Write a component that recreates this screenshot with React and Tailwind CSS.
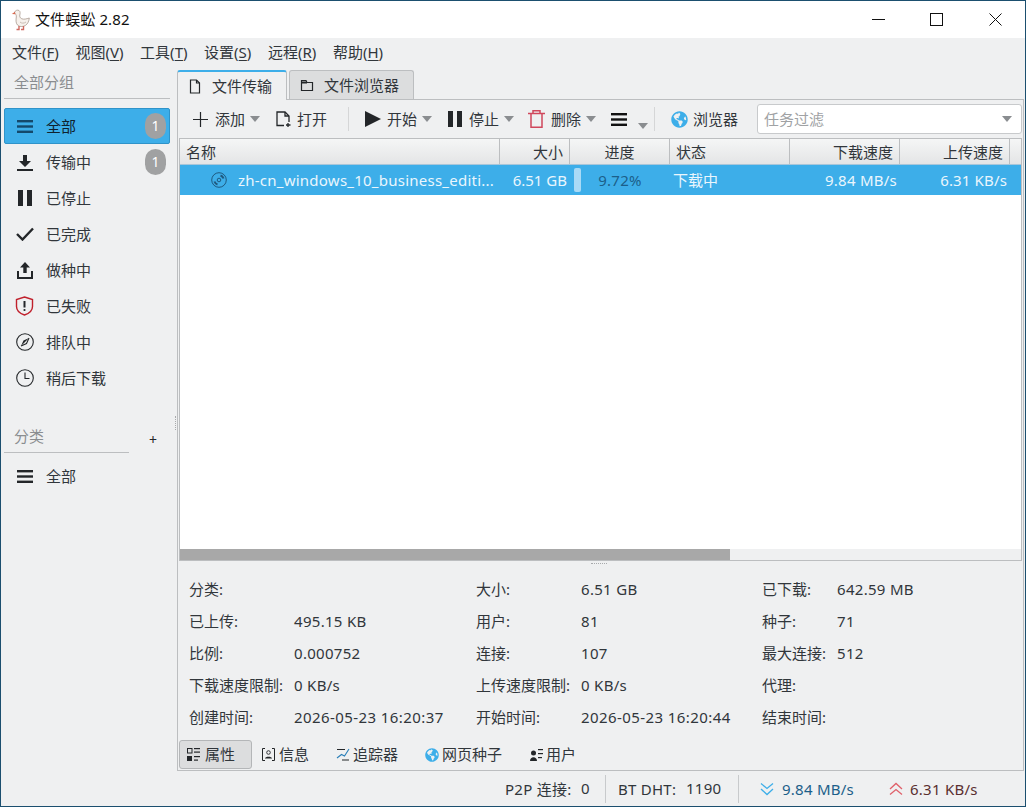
import React from "react";
import { FaGlobeAmericas } from "react-icons/fa";

const Caret = ({ className = "" }) => (
  <svg width="10" height="6" viewBox="0 0 10 6" className={`shrink-0 ${className}`}>
    <path d="M0 0h10L5 6z" fill="#8a8d90" />
  </svg>
);

const Duck = () => (
  <svg width="20" height="22" viewBox="0 0 20 22">
    <path d="M3.500 3.500C4 1.500 6.500 .5 8 1.500c1.500 1 1.200 3 .8 4.500-.3 1.500.2 3 2 3.800 2 .8 4.500 .2 7.500-.8-.3 3-1.500 6-4 7.500-2.500 1.500-6 1.500-7.800-.5C4.500 14 5 10.500 5.300 8 5.500 6.500 5 5.500 4.300 5z" fill="#f6f1ec" stroke="#a99a90" strokeWidth=".8" />
    <path d="M4 2.800L.8 5l3.500.3z" fill="#d8694f" />
    <path d="M9 13c1.500 1.500 4 1.500 6 0" stroke="#c9bdb4" strokeWidth="1" fill="none" />
    <path d="M8 17v3.500H5.500M12.500 17v3.500H10" stroke="#cf6a60" strokeWidth="1.400" fill="none" />
  </svg>
);

const FileIcon = () => (
  <svg width="14" height="15" viewBox="0 0 14 15" fill="none" stroke="#232629" strokeWidth="1.200" className="shrink-0">
    <path d="M2.500 1h6l3 3v10h-9z" />
    <path d="M8.500 1v3h3" />
  </svg>
);

const FolderIcon = () => (
  <svg width="14" height="13" viewBox="0 0 14 13" fill="none" stroke="#232629" strokeWidth="1.200" className="shrink-0">
    <path d="M1.500 1.500h4.500l1 2h5.500v8h-11z" />
    <path d="M1.500 3.500h5.500" strokeWidth="2" />
  </svg>
);

const PlusIcon = () => (
  <svg width="15" height="15" viewBox="0 0 15 15" stroke="#232629" strokeWidth="1.200" className="shrink-0">
    <path d="M7.500 0v15M0 7.500h15" />
  </svg>
);

const OpenIcon = () => (
  <svg width="15" height="16" viewBox="0 0 15 16" fill="none" stroke="#232629" strokeWidth="1.300" className="shrink-0">
    <path d="M8 14.500H1v-13.500h8l4 4v6" />
    <path d="M9 1v4h4" />
    <path d="M12 12v4M10 14h4.500" />
  </svg>
);

const PlayIcon = () => (
  <svg width="16" height="16" viewBox="0 0 16 16" fill="#232629" className="shrink-0">
    <path d="M0 0l16 8-16 8z" />
  </svg>
);

const PauseIcon = ({ className = "" }) => (
  <svg width="14" height="16" viewBox="0 0 14 16" fill="#232629" className={`shrink-0 ${className}`}>
    <rect x="0" y="0" width="5" height="16" />
    <rect x="9" y="0" width="5" height="16" />
  </svg>
);

const TrashIcon = () => (
  <svg width="17" height="18" viewBox="0 0 17 18" fill="none" stroke="#d0475c" strokeWidth="1.500" className="shrink-0">
    <path d="M0 3.500h17M5 3.500v-2.700h7v2.700M3 3.500v13.700h11V3.500" />
  </svg>
);

const BarsIcon = ({ color = "#232629", width = 16 }) => (
  <svg width={width} height="13" viewBox="0 0 16 13" fill={color} className="shrink-0">
    <rect x="0" y="0" width="16" height="2.400" />
    <rect x="0" y="5.300" width="16" height="2.400" />
    <rect x="0" y="10.600" width="16" height="2.400" />
  </svg>
);

const DownloadIcon = () => (
  <svg width="16" height="17" viewBox="0 0 16 17" fill="#232629">
    <path d="M6 1h4v6h4l-6 6-6-6h4z" />
    <rect x="0" y="15" width="16" height="2" />
  </svg>
);

const UploadIcon = () => (
  <svg width="16" height="17" viewBox="0 0 16 17" fill="#232629">
    <path d="M8 0l5 5.500h-3.300V11H6.300V5.500H3z" />
    <path d="M0 9h2v6h12V9h2v8H0z" />
  </svg>
);

const CheckIcon = () => (
  <svg width="18" height="14" viewBox="0 0 18 14" fill="none" stroke="#232629" strokeWidth="2.400">
    <path d="M1 7l5.500 5.500L17 1.500" />
  </svg>
);

const ShieldIcon = () => (
  <svg width="19" height="20" viewBox="0 0 19 20" fill="none">
    <path d="M9.500 1l8 2.500v7c0 4-3.500 7-8 8.500-4.500-1.500-8-4.500-8-8.500v-7z" stroke="#c0202c" strokeWidth="1.400" />
    <path d="M9.500 5v6.500" stroke="#232629" strokeWidth="2" />
    <circle cx="9.500" cy="14" r="1.100" fill="#232629" />
  </svg>
);

const CompassIcon = () => (
  <svg width="18" height="18" viewBox="0 0 18 18" fill="none" stroke="#232629" strokeWidth="1.100">
    <circle cx="9" cy="9" r="8.300" />
    <path d="M13 5l-5.500 2.500L5 13z" fill="#232629" stroke="none" />
    <path d="M13 5l-2.500 5.500L5 13" />
  </svg>
);

const ClockIcon = () => (
  <svg width="18" height="18" viewBox="0 0 18 18" fill="none" stroke="#232629" strokeWidth="1.100">
    <circle cx="9" cy="9" r="8.300" />
    <path d="M9 3.500V9.500h4.500" />
  </svg>
);

const DiscIcon = () => (
  <svg width="16" height="16" viewBox="0 0 16 16" fill="none" stroke="#1f5a80" strokeWidth="1" className="shrink-0">
    <circle cx="8" cy="8" r="7.300" />
    <circle cx="8" cy="8" r="1.800" />
    <path d="M3.500 9.500a4.700 4.700 0 0 0 3 3M12.500 6.500a4.700 4.700 0 0 0-3-3" strokeWidth="2" />
  </svg>
);

const PropsIcon = () => (
  <svg width="13" height="13" viewBox="0 0 13 13" fill="#232629" className="shrink-0">
    <rect x="0.500" y="0.500" width="4.500" height="4.500" fill="none" stroke="#232629" />
    <rect x="0" y="8" width="5" height="5" />
    <rect x="7" y="0" width="6" height="1.200" />
    <rect x="7" y="3.500" width="6" height="1.200" />
    <rect x="7" y="8" width="6" height="1.200" />
    <rect x="7" y="11.500" width="4" height="1.200" />
  </svg>
);

const InfoIcon = () => (
  <svg width="13" height="13" viewBox="0 0 13 13" fill="none" stroke="#232629" className="shrink-0">
    <path d="M3 .500H.500V12.500H3M10 .500h2.500V12.500H10" />
    <circle cx="6.500" cy="4.500" r="1.800" stroke="#232629" strokeWidth=".9" />
    <path d="M3 10.500c0-2.500 7-2.500 7 0z" fill="#232629" stroke="none" />
  </svg>
);

const TrackerIcon = () => (
  <svg width="14" height="13" viewBox="0 0 14 13" fill="none" stroke="#232629" strokeWidth="1.100" className="shrink-0">
    <path d="M1 1.500h8M6 12h7" />
    <path d="M1 10l4.500-3.500 3 1.500L13 1" stroke="#2a7fb8" />
  </svg>
);

const UsersIcon = () => (
  <svg width="13" height="13" viewBox="0 0 13 13" fill="#232629" className="shrink-0">
    <circle cx="3.500" cy="5" r="2.500" />
    <path d="M0 13c0-5 7-5 7 0z" />
    <rect x="8" y="1" width="5" height="1.200" />
    <rect x="8" y="5" width="5" height="1.200" />
    <rect x="8" y="9" width="4" height="1.200" />
  </svg>
);

const Chevrons = ({ color, up }) => (
  <svg width="14" height="14" viewBox="0 0 14 14" fill="none" stroke={color} strokeWidth="1.300" className={`shrink-0 ${up ? "rotate-180" : ""}`}>
    <path d="M1 1.500l6 5 6-5M1 7l6 5.500L13 7" />
  </svg>
);

const MenuItem = ({ label, hot }) => (
  <span>
    {label}(<span className="underline underline-offset-2">{hot}</span>)
  </span>
);

const SideRow = ({ icon, label, count, active }) => (
  <div
    className={`ml-[3px] flex h-[36px] w-[166px] items-center rounded-[2px] border ${
      active ? "border-[#2f93c9] bg-[#3daee9]" : "border-transparent"
    }`}
  >
    <div className="mr-[2px] flex w-[39px] shrink-0 justify-center">{icon}</div>
    <span className={active ? "text-[#10222e]" : "text-[#31363b]"}>{label}</span>
    {count && (
      <span className="ml-auto mr-[3px] flex h-[26px] w-[21px] items-center justify-center rounded-full bg-[#a0a1a2] text-[14px] text-white">
        {count}
      </span>
    )}
  </div>
);

const Sep = ({ className = "" }) => <div className={`h-[24px] w-px shrink-0 bg-[#d5d6d7] ${className}`} />;

const columns = "grid grid-cols-[320px_70px_100px_120px_110px_110px_1fr]";

const Th = ({ children, className = "" }) => (
  <div className={`flex items-center border-r border-[#bcbec0] px-[6px] pt-[1px] ${className}`}>{children}</div>
);

const details = [
  ["分类:", "", "大小:", "6.51 GB", "已下载:", "642.59 MB"],
  ["已上传:", "495.15 KB", "用户:", "81", "种子:", "71"],
  ["比例:", "0.000752", "连接:", "107", "最大连接:", "512"],
  ["下载速度限制:", "0 KB/s", "上传速度限制:", "0 KB/s", "代理:", ""],
  ["创建时间:", "2026-05-23 16:20:37", "开始时间:", "2026-05-23 16:20:44", "结束时间:", ""],
];

export default function App() {
  return (
    <div className="flex h-[807px] w-[1026px] flex-col overflow-hidden whitespace-nowrap border border-[#1b4f6f] bg-[#eff0f1] font-['Noto_Sans','Noto_Sans_CJK_SC',sans-serif] text-[15px] leading-none text-[#31363b]">
      {/* title bar */}
      <div className="flex h-[37px] shrink-0 items-center bg-white pl-[10px] text-[#111]">
        <Duck />
        <span className="ml-[4px] tracking-[0.1px]">文件蜈蚣 2.82</span>
        <div className="ml-auto flex items-center">
          <div className="flex w-[58px] justify-center">
            <svg width="13" height="13" viewBox="0 0 13 13" stroke="#111"><path d="M0 6.500h13" /></svg>
          </div>
          <div className="flex w-[58px] justify-center">
            <svg width="13" height="13" viewBox="0 0 13 13" fill="none" stroke="#111"><rect x=".5" y=".5" width="12" height="12" /></svg>
          </div>
          <div className="flex w-[60px] justify-center">
            <svg width="13" height="13" viewBox="0 0 13 13" stroke="#111"><path d="M.5 .5l12 12M12.500 .5l-12 12" /></svg>
          </div>
        </div>
      </div>

      {/* menu */}
      <div className="flex h-[30px] shrink-0 items-center gap-[16.6px] pb-[2px] pl-[11px]">
        <MenuItem label="文件" hot="F" />
        <MenuItem label="视图" hot="V" />
        <MenuItem label="工具" hot="T" />
        <MenuItem label="设置" hot="S" />
        <MenuItem label="远程" hot="R" />
        <MenuItem label="帮助" hot="H" />
      </div>

      <div className="flex min-h-0 flex-1">
        {/* sidebar */}
        <div className="relative w-[176px] shrink-0">
          <div className="mx-[3px] mb-[9px] flex h-[31px] w-[166px] items-center border-b border-[#bcbec0] pb-[2px] pl-[10px] text-[#8a8d90]">全部分组</div>
          <SideRow active label="全部" count="1" icon={<BarsIcon color="#14496b" />} />
          <SideRow label="传输中" count="1" icon={<DownloadIcon />} />
          <SideRow label="已停止" icon={<PauseIcon />} />
          <SideRow label="已完成" icon={<CheckIcon />} />
          <SideRow label="做种中" icon={<UploadIcon />} />
          <SideRow label="已失败" icon={<ShieldIcon />} />
          <SideRow label="排队中" icon={<CompassIcon />} />
          <SideRow label="稍后下载" icon={<ClockIcon />} />
          <div className="mb-[5px] mt-[26px] flex">
            <div className="ml-[3px] flex h-[31px] w-[125px] items-center border-b border-[#bcbec0] pb-[2px] pl-[10px] text-[#8a8d90]">分类</div>
            <span className="ml-[20px] mt-[11px] text-[14px] text-[#232629]">+</span>
          </div>
          <SideRow label="全部" icon={<BarsIcon />} />
          <div className="absolute right-0 top-[348px] h-[14px] w-[2px] border-l border-dotted border-[#a8aaac]" />
        </div>

        {/* main */}
        <div className="mr-px flex min-w-0 flex-1 flex-col pt-[2px]">
          <div className="flex h-[29px] shrink-0 items-end">
            <div className="relative z-10 -mb-px flex h-[30px] w-[110px] items-center rounded-t-[3px] border-x border-t-2 border-[#bcbec0] border-t-[#3daee9] bg-[#eff0f1] pl-[10px]">
              <FileIcon />
              <span className="ml-[10px]">文件传输</span>
            </div>
            <div className="ml-[2px] flex h-[29px] w-[125px] items-center rounded-t-[3px] border-x border-t border-[#bcbec0] bg-[#dcddde] pl-[10px]">
              <FolderIcon />
              <span className="ml-[10px]">文件浏览器</span>
            </div>
          </div>

          <div className="flex min-h-0 flex-1 flex-col border border-[#bcbec0]">
            {/* toolbar */}
            <div className="flex h-[38px] shrink-0 items-center pl-[15px]">
              <PlusIcon />
              <span className="ml-[7px]">添加</span>
              <Caret className="ml-[5px]" />
              <div className="ml-[16px]"><OpenIcon /></div>
              <span className="ml-[6px]">打开</span>
              <Sep className="ml-[21px]" />
              <div className="ml-[16px]"><PlayIcon /></div>
              <span className="ml-[6px]">开始</span>
              <Caret className="ml-[5px]" />
              <PauseIcon className="ml-[16px]" />
              <span className="ml-[7px]">停止</span>
              <Caret className="ml-[5px]" />
              <div className="ml-[14px]"><TrashIcon /></div>
              <span className="ml-[6px]">删除</span>
              <Caret className="ml-[5px]" />
              <div className="ml-[15px]"><BarsIcon color="#111" /></div>
              <Caret className="ml-[11px] mt-[14px]" />
              <Sep className="ml-[6px]" />
              <FaGlobeAmericas size={17} className="ml-[16px] shrink-0 text-[#3daee9]" />
              <span className="ml-[5px]">浏览器</span>
              <div className="ml-[19px] flex h-[30px] w-[265px] shrink-0 items-center rounded-[3px] border border-[#c8cacc] bg-white pl-[6px] text-[#a0a2a4]">
                任务过滤
                <Caret className="ml-auto mr-[9px]" />
              </div>
            </div>

            {/* table */}
            <div className="mx-px flex h-[423px] shrink-0 flex-col border-x border-t border-[#bcbec0] bg-white">
              <div className={`${columns} h-[26px] shrink-0 border-b border-[#a8c6da] bg-gradient-to-b from-[#f5f6f6] to-[#e4e5e6] text-[#31363b]`}>
                <Th>名称</Th>
                <Th className="justify-end">大小</Th>
                <Th className="justify-center">进度</Th>
                <Th>状态</Th>
                <Th className="justify-end">下载速度</Th>
                <Th className="justify-end">上传速度</Th>
                <div />
              </div>
              <div className={`${columns} h-[30px] shrink-0 items-center bg-[#3daee9] text-[#eaf6fd]`}>
                <div className="flex items-center pl-[31px]">
                  <DiscIcon />
                  <span className="ml-[11px] tracking-[0.24px]">zh-cn_windows_10_business_editi...</span>
                </div>
                <div className="pr-[3px] text-right">6.51 GB</div>
                <div className="relative flex h-full items-center justify-center tracking-[0.25px] text-[#1c5f8a]">
                  <div className="absolute left-[4px] top-[3px] h-[24px] w-[7px] rounded-[2px] bg-[#a9daf6]" />
                  9.72%
                </div>
                <div className="pl-[3px]">下载中</div>
                <div className="pr-[3px] text-right tracking-[0.25px]">9.84 MB/s</div>
                <div className="pr-[3px] text-right tracking-[0.15px]">6.31 KB/s</div>
                <div />
              </div>
              <div className="flex-1" />
              <div className="flex h-[12px] shrink-0 border-b border-[#bcbec0] bg-[#eff0f1]">
                <div className="h-full w-[550px] bg-[#a8a8a8]" />
              </div>
            </div>

            {/* details */}
            <div className="relative flex min-h-0 flex-1 flex-col">
              <div className="absolute left-[413px] top-[2px] w-[16px] border-t border-dotted border-[#a8aaac]" />
              <div className="ml-[11px] mt-[12px] grid auto-rows-[32px] grid-cols-[105px_182px_105px_181px_75px_1fr] items-center">
                {details.flat().map((text, i) => (
                  <span key={i} className={i % 2 === 0 ? "" : /^\d{4}-/.test(text) ? "tracking-[0.42px]" : "tracking-[0.3px]"}>{text}</span>
                ))}
              </div>
              <div className="mb-px ml-px mt-auto flex h-[29px] items-center">
                <div className="flex h-[29px] w-[73px] items-center rounded-[3px] border border-[#b4b6b8] bg-[#dcddde] pl-[7px]">
                  <PropsIcon />
                  <span className="ml-[5px]">属性</span>
                </div>
                <div className="ml-[10px] flex items-center"><InfoIcon /><span className="ml-[4px]">信息</span></div>
                <div className="ml-[27px] flex items-center"><TrackerIcon /><span className="ml-[3px]">追踪器</span></div>
                <div className="ml-[27px] flex items-center"><FaGlobeAmericas size={14} className="shrink-0 text-[#3daee9]" /><span className="ml-[3px]">网页种子</span></div>
                <div className="ml-[28px] flex items-center"><UsersIcon /><span className="ml-[3px]">用户</span></div>
              </div>
            </div>
          </div>
        </div>
      </div>

      {/* status bar */}
      <div className="flex h-[35px] shrink-0 items-center pl-[504px] tracking-[0.25px]">
        <span className="w-[76px] pt-[2px]">P2P 连接:</span>
        <span className="w-[24px]">0</span>
        <div className="h-[28px] w-px bg-[#c8cacc]" />
        <span className="ml-[12px] w-[68px] pt-[2px]">BT DHT:</span>
        <span className="w-[52px]">1190</span>
        <div className="h-[28px] w-px bg-[#c8cacc]" />
        <div className="ml-[21px]"><Chevrons color="#3daee9" /></div>
        <span className="ml-[8px] w-[107px] pt-[2px] text-[#1c5f8a]">9.84 MB/s</span>
        <Chevrons color="#e0606a" up />
        <span className="ml-[7px] pt-[2px] text-[#5a2f30]">6.31 KB/s</span>
      </div>
    </div>
  );
}
